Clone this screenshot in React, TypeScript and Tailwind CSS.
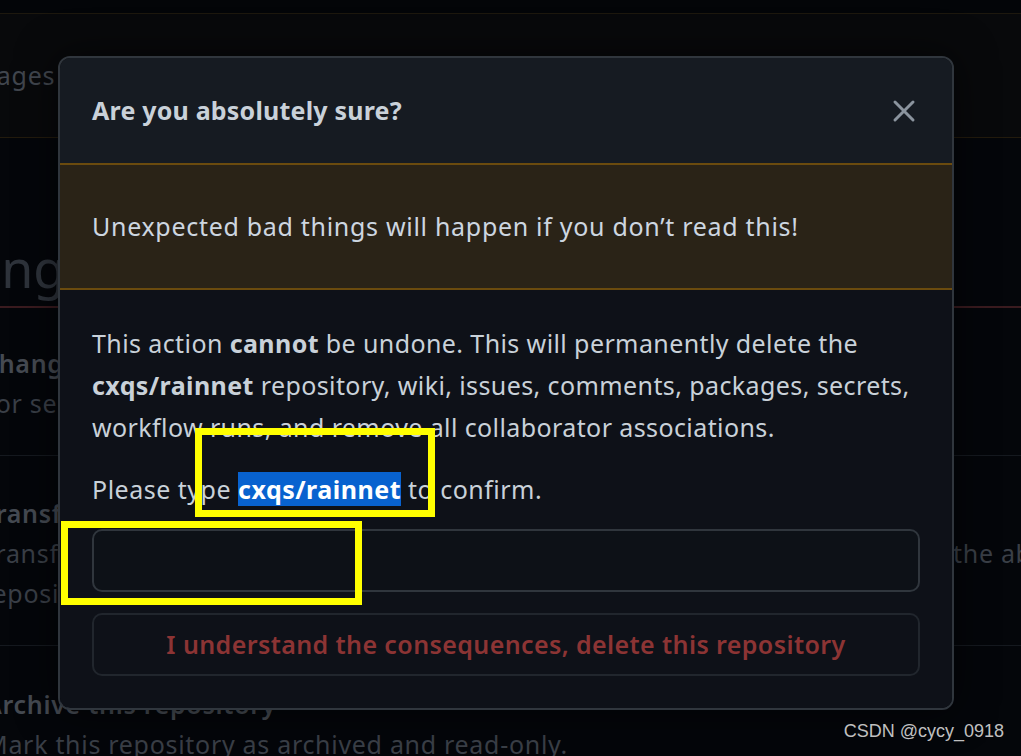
import React from "react";

function CloseIcon() {
  return (
    <svg width="24" height="24" viewBox="0 0 24 24" fill="none">
      <path d="M3 3L21 21M21 3L3 21" stroke="#8b949e" strokeWidth="3" strokeLinecap="round" />
    </svg>
  );
}

function Backdrop() {
  return (
    <div className="flex flex-col text-[25px] tracking-[0.7px] text-[#3a3f47]">
      <div className="h-[14px] bg-[#030508] border-b border-[#1d180e]" />
      <div className="h-[124px] bg-[#08090b] border-b border-[#231b0d] flex items-center">
        <span className="-ml-[19px] text-[#41464e]">Pages</span>
      </div>
      <div className="h-[170px] flex items-center pt-[92px] border-b-2 border-[#3a1b1f]">
        <span className="-ml-[66px] text-[52px] leading-none tracking-normal text-[#2e333b]">Danger Zone</span>
      </div>
      <div className="h-[148px] flex flex-col justify-center leading-[40px] border-b border-[#15191f] -ml-[18px] pt-[2px]">
        <span className="font-semibold text-[#454a52]">Change repository visibility</span>
        <span>For security reasons, you cannot change the visibility of a fork.</span>
      </div>
      <div className="h-[190px] flex flex-col justify-center leading-[40px] border-b border-[#15191f] -ml-[18px] pt-[4px]">
        <span className="font-semibold text-[#454a52]">Transfer ownership</span>
        <div className="flex whitespace-nowrap">
          <span className="w-[971px] shrink-0 overflow-hidden">Transfer this repository to another user or to an organization where you have</span>
          <span>the ability to create repositories.</span>
        </div>
        <span>repository to another user or organization.</span>
      </div>
      <div className="flex flex-col leading-[40px] -ml-[15px] pt-[38px]">
        <span className="font-semibold text-[#454a52]">Archive this repository</span>
        <span>Mark this repository as archived and read-only.</span>
      </div>
    </div>
  );
}

export default function App() {
  return (
    <div
      className="relative w-[1021px] h-[756px] overflow-hidden bg-[#04060a]"
      style={{ fontFamily: '"Noto Sans", "Open Sans", sans-serif' }}
    >
      <Backdrop />

      {/* dialog */}
      <div className="absolute left-[58px] top-[56px] w-[896px] rounded-[12px] border-2 border-[#30363d] overflow-hidden shadow-[0_0_40px_rgba(0,0,0,0.6)] text-[25px] tracking-[0.7px] text-[#c9d1d9]">
        <div className="h-[105px] bg-[#161b22] flex items-center justify-between pl-[32px] pr-[36px]">
          <h2 className="font-bold text-[25px] tracking-[0.2px]">Are you absolutely sure?</h2>
          <CloseIcon />
        </div>
        <div className="h-[127px] bg-[#2a2317] border-y-2 border-[#6b4b0e] flex items-center pl-[32px] text-[#cdd6e0]">
          Unexpected bad things will happen if you don’t read this!
        </div>
        <div className="bg-[#0e1118] px-[32px] pt-[32px] pb-[32px]">
          <p className="leading-[42px] tracking-[0.4px] whitespace-nowrap">
            This action <b>cannot</b> be undone. This will permanently delete the
            <br />
            <b>cxqs/rainnet</b> repository, wiki, issues, comments, packages, secrets,
            <br />
            workflow runs, and remove all collaborator associations.
          </p>
          <p className="leading-[42px] mt-[20px] tracking-[0.5px]">
            Please type <b className="bg-[#0862cf] text-white">cxqs/rainnet</b> to confirm.
          </p>
          <input
            className="mt-[19px] block w-full h-[63px] rounded-[10px] border-2 border-[#30363d] bg-[#0d1117] outline-none"
            aria-label="confirm"
          />
          <button className="mt-[21px] w-full h-[63px] rounded-[10px] border-2 border-[#21262d] bg-[#0e1118] font-semibold tracking-[0.4px] text-[#8c3434]">
            I understand the consequences, delete this repository
          </button>
        </div>
      </div>

      {/* annotation boxes */}
      <div className="absolute left-[195px] top-[428px] w-[240px] h-[89px] border-[7px] border-[#ffff00]" />
      <div className="absolute left-[61px] top-[521px] w-[301px] h-[84px] border-[7px] border-[#ffff00]" />

      <div className="absolute right-[17px] bottom-[11px] text-[18px] text-[#c0c0c0]" style={{ fontFamily: '"Liberation Sans", Arial, sans-serif' }}>
        CSDN @cycy_0918
      </div>
    </div>
  );
}
